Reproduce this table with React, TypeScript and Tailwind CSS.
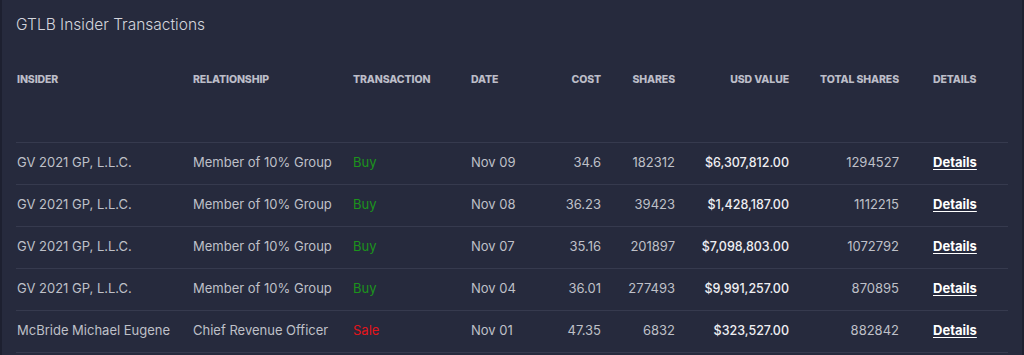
const rows = [
  { insider: 'GV 2021 GP, L.L.C.', relationship: 'Member of 10% Group', type: 'Buy', date: 'Nov 09', cost: '34.6', shares: '182312', value: '$6,307,812.00', total: '1294527' },
  { insider: 'GV 2021 GP, L.L.C.', relationship: 'Member of 10% Group', type: 'Buy', date: 'Nov 08', cost: '36.23', shares: '39423', value: '$1,428,187.00', total: '1112215' },
  { insider: 'GV 2021 GP, L.L.C.', relationship: 'Member of 10% Group', type: 'Buy', date: 'Nov 07', cost: '35.16', shares: '201897', value: '$7,098,803.00', total: '1072792' },
  { insider: 'GV 2021 GP, L.L.C.', relationship: 'Member of 10% Group', type: 'Buy', date: 'Nov 04', cost: '36.01', shares: '277493', value: '$9,991,257.00', total: '870895' },
  { insider: 'McBride Michael Eugene', relationship: 'Chief Revenue Officer', type: 'Sale', date: 'Nov 01', cost: '47.35', shares: '6832', value: '$323,527.00', total: '882842' },
]

const th = 'p-0 text-[10.5px] font-extrabold uppercase text-[#bcbdc8] tracking-[-0.01em]'

export default function App() {
  return (
    <div className="w-[1024px] h-[355px] overflow-hidden bg-[#1d2030] px-[2px] font-['Inter',sans-serif]">
      <div className="h-full bg-[#262a3d] px-[14px] pt-[15px]">
        <h2 className="text-[15.5px] leading-5 font-light text-[#d4d5dc]">GTLB Insider Transactions</h2>
        <table className="w-[992px] table-fixed border-collapse mt-[25px]">
          <colgroup>
            <col className="w-[177px]" />
            <col className="w-[160px]" />
            <col className="w-[118px]" />
            <col className="w-[70px]" />
            <col className="w-[60px]" />
            <col className="w-[74px]" />
            <col className="w-[114px]" />
            <col className="w-[110px]" />
            <col className="w-[109px]" />
          </colgroup>
          <thead>
            <tr className="h-[82px] align-top border-b border-[#363a4e]">
              <th className={`${th} text-left pl-px pt-[12px]`}>Insider</th>
              <th className={`${th} text-left pt-[12px]`}>Relationship</th>
              <th className={`${th} text-left pt-[12px]`}>Transaction</th>
              <th className={`${th} text-left pt-[12px]`}>Date</th>
              <th className={`${th} text-right pt-[12px]`}>Cost</th>
              <th className={`${th} text-right pt-[12px]`}>Shares</th>
              <th className={`${th} text-right pt-[12px]`}>USD Value</th>
              <th className={`${th} text-right pt-[12px]`}>Total Shares</th>
              <th className={`${th} text-left pl-[34px] pt-[12px]`}>Details</th>
            </tr>
          </thead>
          <tbody className="text-[13px] text-[#bfc0c8]">
            {rows.map((r, i) => (
              <tr key={i} className="h-[42px] border-b border-[#363a4e]">
                <td className="p-0 pl-px whitespace-nowrap">{r.insider}</td>
                <td className="p-0 whitespace-nowrap">{r.relationship}</td>
                <td className={r.type === 'Buy' ? 'p-0 text-[#1c941c]' : 'p-0 text-[#e3141b]'}>{r.type}</td>
                <td className="p-0">{r.date}</td>
                <td className="p-0 text-right">{r.cost}</td>
                <td className="p-0 text-right">{r.shares}</td>
                <td className="p-0 text-right text-[12.5px] font-medium text-[#eeeef2]">{r.value}</td>
                <td className="p-0 text-right">{r.total}</td>
                <td className="p-0 pl-[34px]">
                  <a className="font-bold text-white underline underline-offset-2">Details</a>
                </td>
              </tr>
            ))}
          </tbody>
        </table>
      </div>
    </div>
  )
}
